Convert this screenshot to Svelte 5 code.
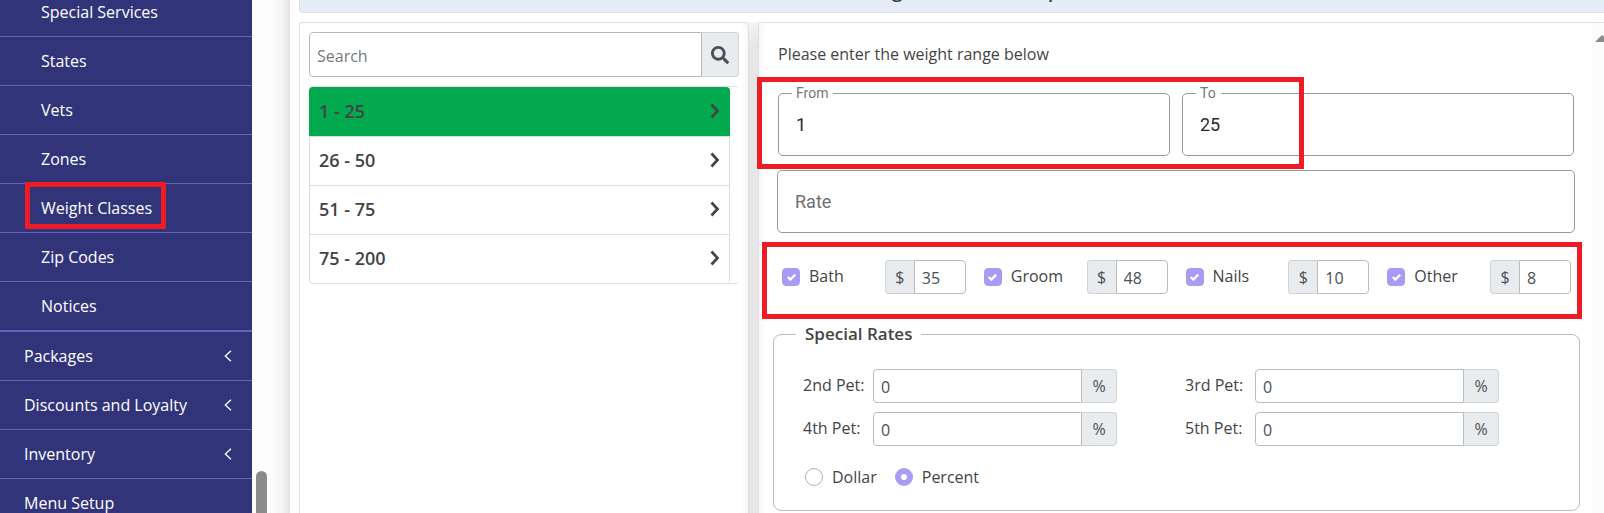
<script>
  const subItems = ['Special Services', 'States', 'Vets', 'Zones', 'Weight Classes', 'Zip Codes', 'Notices'];
  const groups = [
    { name: 'Packages', expandable: true },
    { name: 'Discounts and Loyalty', expandable: true },
    { name: 'Inventory', expandable: true },
    { name: 'Menu Setup', expandable: false }
  ];
  const ranges = ['1 - 25', '26 - 50', '51 - 75', '75 - 200'];
  let selected = $state('1 - 25');
  let services = $state([
    { id: 'bath', name: 'Bath', on: true, price: '35' },
    { id: 'groom', name: 'Groom', on: true, price: '48' },
    { id: 'nails', name: 'Nails', on: true, price: '10' },
    { id: 'other', name: 'Other', on: true, price: '8' }
  ]);
  let pets = $state([
    { id: 'pet2', name: '2nd Pet:', rate: '0' },
    { id: 'pet3', name: '3rd Pet:', rate: '0' },
    { id: 'pet4', name: '4th Pet:', rate: '0' },
    { id: 'pet5', name: '5th Pet:', rate: '0' }
  ]);
  let unit = $state('percent');
</script>

<div class="page">
  <nav class="sidebar">
    <ul class="sub">
      {#each subItems as item}
        <li><a href="#top"><span class:marked={item === 'Weight Classes'}>{item}</span></a></li>
      {/each}
    </ul>
    <ul class="groups">
      {#each groups as group}
        <li>
          <a href="#top">
            <span>{group.name}</span>
            {#if group.expandable}
              <svg width="8" height="12" viewBox="0 0 8 12" aria-hidden="true"><path d="M7 .7 1.3 6 7 11.3" /></svg>
            {/if}
          </a>
        </li>
      {/each}
    </ul>
  </nav>
  <div class="gutter"><div class="thumb"></div></div>

  <main>
    <h1>Weight Classes Setup</h1>
    <div class="panels">
      <section class="panel list-panel">
        <div class="search">
          <input type="text" placeholder="Search" aria-label="Search" />
          <button aria-label="Search weight classes">
            <svg width="18" height="18" viewBox="0 0 512 512" aria-hidden="true"><path d="M505 442.700 405.300 343c-4.500-4.500-10.600-7-17-7H372c27.600-35.300 44-79.700 44-128C416 93.100 322.900 0 208 0S0 93.100 0 208s93.100 208 208 208c48.300 0 92.700-16.400 128-44v16.300c0 6.400 2.500 12.500 7 17l99.700 99.700c9.400 9.400 24.600 9.400 33.900 0l28.300-28.300c9.400-9.400 9.400-24.600.1-34zM208 336c-70.700 0-128-57.200-128-128 0-70.700 57.200-128 128-128 70.700 0 128 57.200 128 128 0 70.700-57.200 128-128 128z" /></svg>
          </button>
        </div>
        <div class="ranges">
          {#each ranges as range}
            <button class:active={selected === range} onclick={() => (selected = range)}>
              <span>{range}</span>
              <svg width="10" height="16" viewBox="0 0 10 16" aria-hidden="true"><path d="m1.500 1.500 6 6.500-6 6.500" /></svg>
            </button>
          {/each}
        </div>
      </section>

      <section class="panel form-panel">
        <form>
          <p>Please enter the weight range below</p>
          <div class="bounds">
            <div class="field">
              <label for="from">From</label>
              <input id="from" type="text" value="1" />
            </div>
            <div class="field">
              <label for="to">To</label>
              <input id="to" type="text" value="25" />
            </div>
            <span class="outline"></span>
          </div>
          <input class="rate" type="text" placeholder="Rate" aria-label="Rate" />
          <div class="services">
            {#each services as service}
              <div class="service">
                <input type="checkbox" id={service.id} bind:checked={service.on} />
                <label for={service.id}>{service.name}</label>
                <div class="group money">
                  <span>$</span>
                  <input type="text" aria-label="{service.name} price" bind:value={service.price} />
                </div>
              </div>
            {/each}
            <span class="outline"></span>
          </div>
          <fieldset>
            <legend>Special Rates</legend>
            <div class="pets">
              {#each pets as pet}
                <div class="pet">
                  <label for={pet.id}>{pet.name}</label>
                  <div class="group">
                    <input id={pet.id} type="text" bind:value={pet.rate} />
                    <span>%</span>
                  </div>
                </div>
              {/each}
            </div>
            <div class="units">
              <label><input type="radio" name="unit" value="dollar" bind:group={unit} />Dollar</label>
              <label><input type="radio" name="unit" value="percent" bind:group={unit} />Percent</label>
            </div>
          </fieldset>
        </form>
        <div class="track">
          <svg width="14" height="7" viewBox="0 0 14 7" aria-hidden="true"><path d="M7 0 14 7H0z" /></svg>
        </div>
      </section>
    </div>
  </main>
</div>

<style>
  :global(body) {
    margin: 0;
    overflow: hidden;
  }
  .page {
    display: flex;
    height: 100vh;
    overflow: hidden;
    background: #fff;
    color: #444;
    font: 16px/24px 'Open Sans', 'Noto Sans', sans-serif;
  }
  .page :is(input, button) {
    box-sizing: border-box;
    margin: 0;
    font: inherit;
    color: inherit;
  }
  ul {
    list-style: none;
    margin: 0;
    padding: 0;
  }

  .sidebar {
    flex: 0 0 252px;
    background: #32347a;
  }
  .sub {
    margin-top: -12px;
    border-bottom: 1px solid #6264bd;
  }
  .sidebar a {
    display: flex;
    align-items: center;
    justify-content: space-between;
    height: 48px;
    padding: 0 20px 0 24px;
    border-bottom: 1px solid #6264bd;
    color: #fff;
    text-decoration: none;
  }
  .sub a {
    padding-left: 41px;
  }
  .sidebar span {
    position: relative;
  }
  .sidebar svg {
    fill: none;
    stroke: #fff;
    stroke-width: 1.3;
  }
  .marked::after {
    content: '';
    position: absolute;
    inset: -14px -14px -9px -16px;
    border: 5px solid #ee1c24;
  }

  .gutter {
    flex: 0 0 38px;
    box-sizing: border-box;
    display: flex;
    flex-direction: column;
    justify-content: flex-end;
    padding-left: 4px;
    background: linear-gradient(90deg, #fdfdfd 50%, #f4f4f4 80%, #e4e4e4);
  }
  .thumb {
    width: 11px;
    height: 42px;
    border-radius: 6px 6px 0 0;
    background: #8b8b8b;
  }

  main {
    flex: 1;
    min-width: 0;
    display: flex;
    flex-direction: column;
    margin-right: -13px;
    padding-left: 9px;
  }
  h1 {
    margin: -29px 0 9px;
    padding: 4px 0 8px;
    border: 1px solid #dadfe6;
    border-radius: 4px;
    background: #e6edf8;
    font-size: 20px;
    line-height: 28px;
    font-weight: 600;
    text-align: center;
  }
  .panels {
    flex: 1;
    display: flex;
    gap: 9px;
    background: linear-gradient(#f4f4f4, #e6e6e6 24px);
  }
  .panel {
    box-sizing: border-box;
    border: 1px solid #dee0e8;
    border-bottom: 0;
    border-radius: 4px 4px 0 0;
    background: #fff;
  }

  .list-panel {
    flex: 0 0 450px;
    padding: 9px;
    box-shadow: inset -10px 0 10px -10px #eee;
  }
  .search {
    display: flex;
    height: 45px;
    margin-bottom: 9px;
  }
  .search input {
    flex: 1;
    min-width: 0;
    padding: 2px 7px 0;
    border: 1px solid #b8b8b8;
    border-radius: 4px 0 0 4px;
  }
  .search input::placeholder {
    color: #75797e;
  }
  .search button {
    width: 37px;
    padding: 0;
    border: 1px solid #ced4da;
    border-left: 0;
    border-radius: 0 4px 4px 0;
    background: #e9ecef;
    line-height: 0;
  }
  .search path {
    fill: #495057;
  }
  .ranges {
    padding-right: 9px;
    border-top: 1px solid #e0e0e4;
    border-bottom: 1px solid #e0e0e4;
    border-radius: 4px;
  }
  .ranges button {
    display: flex;
    align-items: center;
    justify-content: space-between;
    width: 100%;
    height: 49px;
    padding: 0 9px 2px;
    border: 1px solid #dcdcdf;
    border-width: 1px 1px 0;
    background: #fff;
    font-size: 18px;
    font-weight: 600;
  }
  .ranges button.active {
    border-color: #02a94f;
    background: #02a94f;
  }
  .ranges button:first-child {
    border-radius: 4px 4px 0 0;
  }
  .ranges button:last-child {
    border-radius: 0 0 4px 4px;
  }
  .ranges path {
    fill: none;
    stroke: #444;
    stroke-width: 2.7;
  }

  .form-panel {
    flex: 1;
    min-width: 0;
    display: flex;
    box-shadow: inset 10px 0 10px -10px #eee;
  }
  form {
    flex: 1;
    min-width: 0;
    padding: 19px 12px 0 14px;
  }
  p {
    margin: 0 0 27px 5px;
  }
  .bounds {
    position: relative;
    display: grid;
    grid-template-columns: 1fr 1fr;
    gap: 12px;
    margin: 0 6px 14px 5px;
  }
  .outline {
    position: absolute;
    box-sizing: border-box;
    border: 5px solid #ee1c24;
    pointer-events: none;
  }
  .bounds .outline {
    left: -21px;
    top: -16px;
    width: 547px;
    height: 92px;
  }
  .field {
    position: relative;
  }
  .field label {
    position: absolute;
    left: 14px;
    top: -10px;
    padding: 0 5px 0 4px;
    background: #fff;
    color: #777;
    font: 14px/20px Roboto, sans-serif;
  }
  .field input,
  input.rate {
    display: block;
    width: 100%;
    height: 63px;
    padding: 0 17px;
    border: 1px solid #999;
    border-radius: 5px;
    background: transparent;
    color: #2a2a2a;
    font: 18px/24px Roboto, sans-serif;
  }
  input.rate {
    width: calc(100% - 9px);
    margin-left: 4px;
  }
  input.rate::placeholder {
    color: #707070;
  }

  .services {
    position: relative;
    display: grid;
    grid-template-columns: repeat(4, 1fr);
    gap: 18px;
    margin: 27px 9px 28px;
  }
  .services .outline {
    inset: -18px -11px -25px -20px;
  }
  .service {
    display: flex;
    align-items: center;
  }
  .service label {
    flex: 1;
    margin-left: 9px;
    padding-bottom: 2px;
  }
  [type='checkbox'],
  [type='radio'] {
    appearance: none;
    flex: none;
    width: 18px;
    height: 18px;
    border: 1px solid #adb5bd;
    background: #fff;
  }
  [type='checkbox'] {
    border-radius: 4px;
  }
  [type='checkbox']:checked {
    border-color: #a99bf5;
    background: #a99bf5 url("data:image/svg+xml,%3Csvg xmlns='http://www.w3.org/2000/svg' viewBox='0 0 8 8'%3E%3Cpath fill='%23fff' d='M6.564.75l-3.590 3.612-1.538-1.550L0 4.260 2.974 7.250 8 2.193z'/%3E%3C/svg%3E") center / 9px no-repeat;
  }
  [type='radio'] {
    border-radius: 50%;
  }
  [type='radio']:checked {
    border: 6px solid #a99bf5;
  }
  .group {
    display: flex;
    height: 34px;
  }
  .group input {
    flex: 1;
    min-width: 0;
    padding: 2px 7px 0;
    border: 1px solid #bbb;
    border-radius: 4px 0 0 4px;
    background: #fff;
    color: #495057;
  }
  .group span {
    box-sizing: border-box;
    width: 35px;
    border: 1px solid #ced4da;
    border-left: 0;
    border-radius: 0 4px 4px 0;
    background: #e9ecef;
    color: #495057;
    line-height: 32px;
    text-align: center;
  }
  .group.money {
    width: 81px;
  }
  .money span {
    width: 29px;
    border-width: 1px 0 1px 1px;
    border-left: 1px solid #ced4da;
    border-radius: 4px 0 0 4px;
  }
  .money input {
    border-radius: 0 4px 4px 0;
  }

  fieldset {
    min-width: 0;
    margin: 0;
    padding: 23px 80px 21px 29px;
    border: 1px solid #bbb;
    border-radius: 8px;
  }
  legend {
    margin-left: -7px;
    padding: 0 9px;
    font-size: 17px;
    font-weight: 600;
  }
  .pets {
    display: grid;
    grid-template-columns: 1fr 1fr;
    gap: 9px 68px;
  }
  .pet {
    display: flex;
    min-width: 0;
  }
  .pet label {
    flex: 0 0 70px;
    line-height: 32px;
  }
  .pet .group {
    flex: 1;
    min-width: 0;
  }
  .units {
    display: flex;
    gap: 18px;
    margin: 19px 0 0 2px;
  }
  .units label {
    display: flex;
    align-items: center;
    gap: 9px;
  }

  .track {
    box-sizing: border-box;
    flex: 0 0 24px;
    padding: 12px 0 0 3px;
    background: #fbfbfb;
    line-height: 0;
  }
  .track path {
    fill: #8b8b8b;
  }
</style>
